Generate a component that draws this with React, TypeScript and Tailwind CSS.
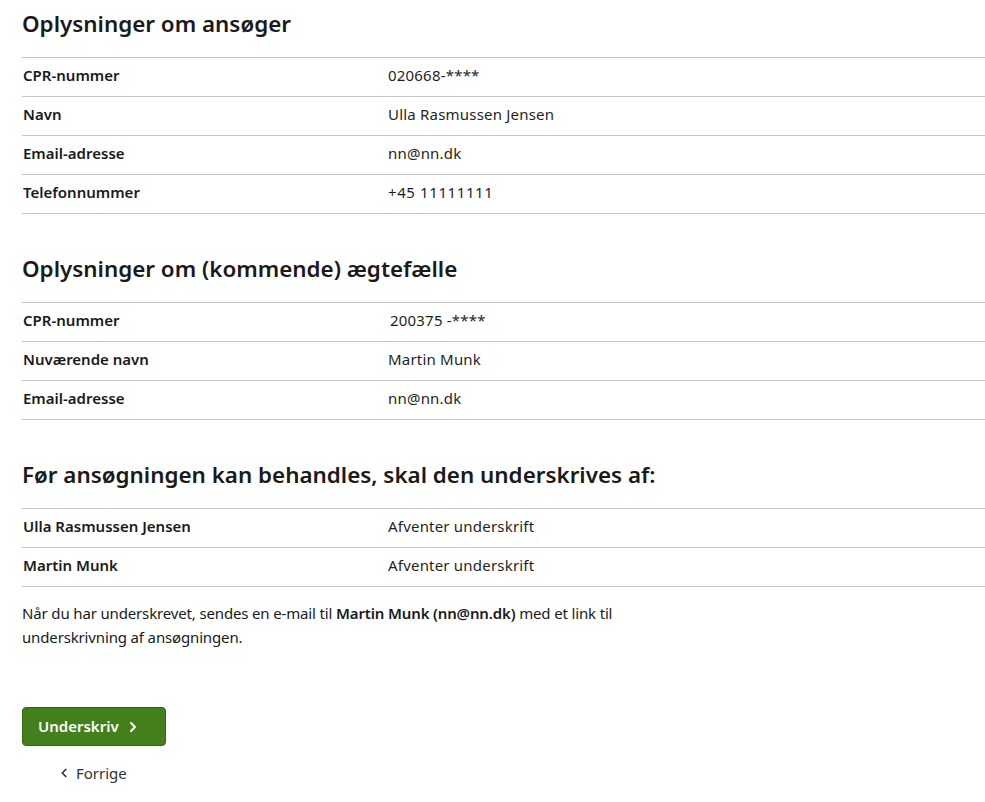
import { FiChevronLeft, FiChevronRight } from 'react-icons/fi';

type Row = { label: string; value: string; valueClass?: string };

const applicant: Row[] = [
    { label: 'CPR-nummer', value: '020668-****' },
    { label: 'Navn', value: 'Ulla Rasmussen Jensen' },
    { label: 'Email-adresse', value: 'nn@nn.dk' },
    { label: 'Telefonnummer', value: '+45 11111111', valueClass: 'tracking-[0.6px]' },
];

const spouse: Row[] = [
    { label: 'CPR-nummer', value: '200375 -****', valueClass: 'pl-[2px]' },
    { label: 'Nuværende navn', value: 'Martin Munk' },
    { label: 'Email-adresse', value: 'nn@nn.dk' },
];

const signers: Row[] = [
    { label: 'Ulla Rasmussen Jensen', value: 'Afventer underskrift' },
    { label: 'Martin Munk', value: 'Afventer underskrift' },
];

function InfoTable({ rows }: { rows: Row[] }) {
    return (
        <div className="border-t border-[#c6c6c6]">
            {rows.map(row => (
                <div
                    key={row.label + row.value}
                    className="grid grid-cols-[366px_1fr] h-[39px] pb-[3px] items-center border-b border-[#c6c6c6] text-[15px]"
                >
                    <div className="pl-px font-semibold text-[#1a1a1a]">{row.label}</div>
                    <div className={`text-[#1f1f1f] tracking-[0.2px] ${row.valueClass ?? ''}`}>{row.value}</div>
                </div>
            ))}
        </div>
    );
}

function Heading({ children }: { children: React.ReactNode }) {
    return <h2 className="text-[22.4px] font-semibold text-[#1a1a1a] leading-[30px]">{children}</h2>;
}

export default function App() {
    return (
        <div
            className="min-h-[802px] bg-white pl-[22px] pt-[9px] pb-4"
            style={{ fontFamily: '"Noto Sans", "Open Sans", sans-serif' }}
        >
            <Heading>Oplysninger om ansøger</Heading>
            <div className="mt-[18px]">
                <InfoTable rows={applicant} />
            </div>

            <div className="mt-[40px]">
                <Heading>Oplysninger om (kommende) ægtefælle</Heading>
            </div>
            <div className="mt-[18px]">
                <InfoTable rows={spouse} />
            </div>

            <div className="mt-[40px]">
                <Heading>Før ansøgningen kan behandles, skal den underskrives af:</Heading>
            </div>
            <div className="mt-[18px]">
                <InfoTable rows={signers} />
            </div>

            <p className="mt-[14px] max-w-[650px] text-[15px] leading-6 text-[#1a1a1a] tracking-[-0.15px]">
                Når du har underskrevet, sendes en e-mail til{' '}
                <span className="font-semibold">Martin Munk (nn@nn.dk)</span> med et link til underskrivning af
                ansøgningen.
            </p>

            <div className="mt-[58px]">
                <button className="flex items-center gap-[6px] h-[39px] pl-[15px] pr-[24px] rounded-[4px] bg-[#43801c] border border-[#35661a] text-white text-[15px] font-semibold">
                    Underskriv
                    <FiChevronRight className="w-[16px] h-[16px]" strokeWidth={3} />
                </button>
            </div>

            <div className="mt-[16px] ml-[35px] flex items-center gap-[5px] text-[15px] text-[#333]">
                <FiChevronLeft className="w-[14px] h-[14px]" strokeWidth={3} />
                Forrige
            </div>
        </div>
    );
}
